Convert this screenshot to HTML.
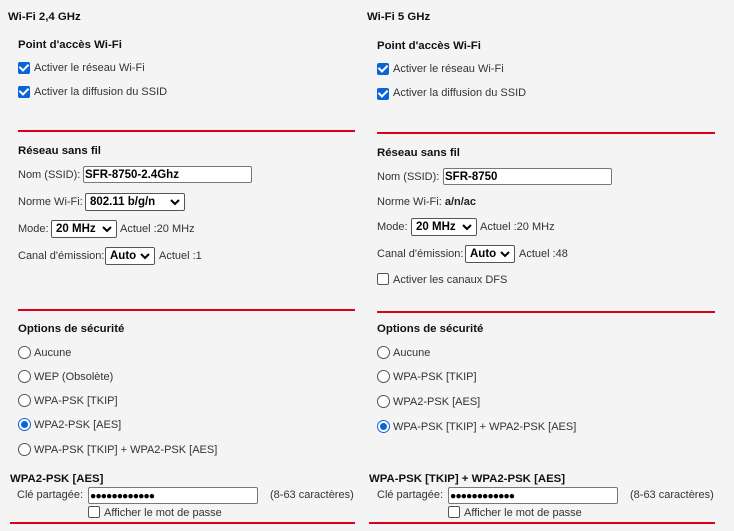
<!DOCTYPE html>
<html><head><meta charset="utf-8"><style>
body{margin:0;width:734px;height:530px;background:#f4f4f4;font-family:"Liberation Sans",sans-serif;font-size:11px;color:#333;position:relative;overflow:hidden}
#w{position:absolute;left:0;top:1px;width:734px;height:530px}
.a{position:absolute;line-height:16px;white-space:nowrap}
.h{font-weight:bold;color:#111;font-size:11.4px}
.line{position:absolute;height:2px;background:#d8001c}
.cb{position:absolute;width:12px;height:12px;border-radius:2px;box-sizing:border-box}
.cb.on{background:#0a64d8}
.cb.on:after{content:"";position:absolute;left:3px;top:0px;width:4px;height:7px;border:solid #fff;border-width:0 2px 2px 0;transform:rotate(45deg)}
.cb.off{border:1px solid #555;background:#fff}
.rb{position:absolute;width:13px;height:13px;border-radius:50%;border:1px solid #555;box-sizing:border-box;background:#fff}
.rb.on{border-color:#0a64d8}
.rb.on:after{content:"";position:absolute;left:2px;top:2px;width:7px;height:7px;border-radius:50%;background:#0a64d8}
.in{position:absolute;height:17px;border:1px solid #777;border-radius:2px;background:#fff;box-sizing:border-box;font-weight:bold;color:#000;font-size:11.5px;line-height:16px;padding-left:1px}
.sel{position:absolute;height:18px;border:1px solid #555;border-radius:2px;background:#fff;box-sizing:border-box;font-weight:bold;color:#000;font-size:11.5px;line-height:17px;padding-left:4px}
.sel svg{position:absolute;right:4px;top:5px}
.dots{letter-spacing:-1px;font-size:10.5px}
</style></head><body><div id="w">
<div class="a h" style="left:8px;top:8px">Wi-Fi 2,4 GHz</div>
<div class="a h" style="left:18px;top:36px">Point d'accès Wi-Fi</div>
<div class="cb on" style="left:18px;top:61px"></div><div class="a" style="left:34px;top:59px">Activer le réseau Wi-Fi</div>
<div class="cb on" style="left:18px;top:85px"></div><div class="a" style="left:34px;top:83px">Activer la diffusion du SSID</div>
<div class="line" style="left:18px;top:129px;width:337px"></div>
<div class="a h" style="left:18px;top:142px">Réseau sans fil</div>
<div class="a" style="left:18px;top:166px">Nom (SSID):</div>
<div class="in" style="left:83px;top:165px;width:169px">SFR-8750-2.4Ghz</div>
<div class="a" style="left:18px;top:193px">Norme Wi-Fi:</div>
<div class="sel" style="left:85px;top:192px;width:100px">802.11 b/g/n<svg width="10" height="7"><path d="M1 1L5 5L9 1" stroke="#000" stroke-width="2" fill="none"/></svg></div>
<div class="a" style="left:18px;top:220px">Mode:</div>
<div class="sel" style="left:51px;top:219px;width:66px">20 MHz<svg width="10" height="7"><path d="M1 1L5 5L9 1" stroke="#000" stroke-width="2" fill="none"/></svg></div>
<div class="a" style="left:120px;top:220px">Actuel :20 MHz</div>
<div class="a" style="left:18px;top:247px">Canal d'émission:</div>
<div class="sel" style="left:105px;top:246px;width:50px">Auto<svg width="10" height="7"><path d="M1 1L5 5L9 1" stroke="#000" stroke-width="2" fill="none"/></svg></div>
<div class="a" style="left:159px;top:247px">Actuel :1</div>
<div class="line" style="left:18px;top:308px;width:337px"></div>
<div class="a h" style="left:18px;top:320px">Options de sécurité</div>
<div class="rb" style="left:18px;top:345px"></div><div class="a" style="left:34px;top:344px">Aucune</div>
<div class="rb" style="left:18px;top:369px"></div><div class="a" style="left:34px;top:368px">WEP (Obsolète)</div>
<div class="rb" style="left:18px;top:393px"></div><div class="a" style="left:34px;top:392px">WPA-PSK [TKIP]</div>
<div class="rb on" style="left:18px;top:417px"></div><div class="a" style="left:34px;top:416px">WPA2-PSK [AES]</div>
<div class="rb" style="left:18px;top:442px"></div><div class="a" style="left:34px;top:441px">WPA-PSK [TKIP] + WPA2-PSK [AES]</div>
<div class="a h" style="left:10px;top:470px">WPA2-PSK [AES]</div>
<div class="a" style="left:17px;top:486px">Clé partagée:</div>
<div class="in dots" style="left:88px;top:486px;width:170px">●●●●●●●●●●●●</div>
<div class="a" style="left:270px;top:486px">(8-63 caractères)</div>
<div class="cb off" style="left:88px;top:505px"></div><div class="a" style="left:104px;top:504px">Afficher le mot de passe</div>
<div class="line" style="left:10px;top:521px;width:345px"></div>

<div class="a h" style="left:367px;top:8px">Wi-Fi 5 GHz</div>
<div class="a h" style="left:377px;top:37px">Point d'accès Wi-Fi</div>
<div class="cb on" style="left:377px;top:62px"></div><div class="a" style="left:393px;top:60px">Activer le réseau Wi-Fi</div>
<div class="cb on" style="left:377px;top:87px"></div><div class="a" style="left:393px;top:84px">Activer la diffusion du SSID</div>
<div class="line" style="left:377px;top:131px;width:338px"></div>
<div class="a h" style="left:377px;top:144px">Réseau sans fil</div>
<div class="a" style="left:377px;top:168px">Nom (SSID):</div>
<div class="in" style="left:443px;top:167px;width:169px">SFR-8750</div>
<div class="a" style="left:377px;top:193px">Norme Wi-Fi: <b style="color:#222">a/n/ac</b></div>
<div class="a" style="left:377px;top:218px">Mode:</div>
<div class="sel" style="left:411px;top:217px;width:66px">20 MHz<svg width="10" height="7"><path d="M1 1L5 5L9 1" stroke="#000" stroke-width="2" fill="none"/></svg></div>
<div class="a" style="left:480px;top:218px">Actuel :20 MHz</div>
<div class="a" style="left:377px;top:245px">Canal d'émission:</div>
<div class="sel" style="left:465px;top:244px;width:50px">Auto<svg width="10" height="7"><path d="M1 1L5 5L9 1" stroke="#000" stroke-width="2" fill="none"/></svg></div>
<div class="a" style="left:519px;top:245px">Actuel :48</div>
<div class="cb off" style="left:377px;top:272px"></div><div class="a" style="left:393px;top:271px">Activer les canaux DFS</div>
<div class="line" style="left:377px;top:310px;width:338px"></div>
<div class="a h" style="left:377px;top:320px">Options de sécurité</div>
<div class="rb" style="left:377px;top:345px"></div><div class="a" style="left:393px;top:344px">Aucune</div>
<div class="rb" style="left:377px;top:369px"></div><div class="a" style="left:393px;top:368px">WPA-PSK [TKIP]</div>
<div class="rb" style="left:377px;top:394px"></div><div class="a" style="left:393px;top:393px">WPA2-PSK [AES]</div>
<div class="rb on" style="left:377px;top:419px"></div><div class="a" style="left:393px;top:418px">WPA-PSK [TKIP] + WPA2-PSK [AES]</div>
<div class="a h" style="left:369px;top:470px">WPA-PSK [TKIP] + WPA2-PSK [AES]</div>
<div class="a" style="left:377px;top:486px">Clé partagée:</div>
<div class="in dots" style="left:448px;top:486px;width:170px">●●●●●●●●●●●●</div>
<div class="a" style="left:630px;top:486px">(8-63 caractères)</div>
<div class="cb off" style="left:448px;top:505px"></div><div class="a" style="left:464px;top:504px">Afficher le mot de passe</div>
<div class="line" style="left:369px;top:521px;width:346px"></div>
</div></body></html>
